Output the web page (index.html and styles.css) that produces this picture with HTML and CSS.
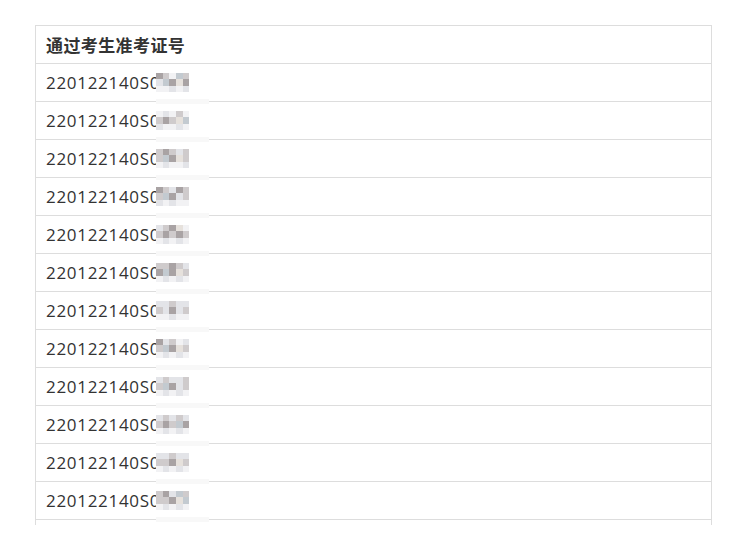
FILE: index.html
```html
<!DOCTYPE html>
<html lang="zh">
<head>
<meta charset="utf-8">
<link rel="stylesheet" href="styles.css">
</head>
<body>
<div class="frame">
<table class="list">
<thead><tr><th>通过考生准考证号</th></tr></thead>
<tbody>
<tr><td>220122140S0<span class="mosaic"><i class="a"></i><i class="b"></i><i class="f"></i><i class="c"></i><i class="b"></i><i class="e"></i><i class="c"></i><i class="a"></i><i class="d"></i><i class="a"></i><i class="f"></i><i class="f"></i><i class="e"></i><i class="f"></i><i class="e"></i></span></td></tr>
<tr><td>220122140S0<span class="mosaic"><i class="f"></i><i class="e"></i><i class="f"></i><i class="b"></i><i class="f"></i><i class="b"></i><i class="a"></i><i class="b"></i><i class="d"></i><i class="c"></i><i class="e"></i><i class="f"></i><i class="f"></i><i class="e"></i><i class="f"></i></span></td></tr>
<tr><td>220122140S0<span class="mosaic"><i class="b"></i><i class="a"></i><i class="b"></i><i class="e"></i><i class="b"></i><i class="b"></i><i class="c"></i><i class="a"></i><i class="d"></i><i class="b"></i><i class="f"></i><i class="e"></i><i class="f"></i><i class="f"></i><i class="e"></i></span></td></tr>
<tr><td>220122140S0<span class="mosaic"><i class="a"></i><i class="b"></i><i class="e"></i><i class="a"></i><i class="b"></i><i class="b"></i><i class="c"></i><i class="a"></i><i class="e"></i><i class="b"></i><i class="e"></i><i class="f"></i><i class="e"></i><i class="f"></i><i class="f"></i></span></td></tr>
<tr><td>220122140S0<span class="mosaic"><i class="e"></i><i class="b"></i><i class="a"></i><i class="d"></i><i class="f"></i><i class="b"></i><i class="a"></i><i class="b"></i><i class="a"></i><i class="b"></i><i class="f"></i><i class="e"></i><i class="f"></i><i class="e"></i><i class="f"></i></span></td></tr>
<tr><td>220122140S0<span class="mosaic"><i class="b"></i><i class="b"></i><i class="a"></i><i class="b"></i><i class="e"></i><i class="a"></i><i class="c"></i><i class="a"></i><i class="d"></i><i class="b"></i><i class="f"></i><i class="e"></i><i class="f"></i><i class="e"></i><i class="f"></i></span></td></tr>
<tr><td>220122140S0<span class="mosaic"><i class="e"></i><i class="e"></i><i class="b"></i><i class="e"></i><i class="e"></i><i class="b"></i><i class="e"></i><i class="a"></i><i class="e"></i><i class="b"></i><i class="f"></i><i class="f"></i><i class="e"></i><i class="f"></i><i class="f"></i></span></td></tr>
<tr><td>220122140S0<span class="mosaic"><i class="a"></i><i class="e"></i><i class="b"></i><i class="f"></i><i class="e"></i><i class="b"></i><i class="c"></i><i class="a"></i><i class="d"></i><i class="b"></i><i class="f"></i><i class="e"></i><i class="f"></i><i class="e"></i><i class="f"></i></span></td></tr>
<tr><td>220122140S0<span class="mosaic"><i class="e"></i><i class="b"></i><i class="e"></i><i class="e"></i><i class="b"></i><i class="b"></i><i class="c"></i><i class="a"></i><i class="e"></i><i class="b"></i><i class="f"></i><i class="e"></i><i class="f"></i><i class="e"></i><i class="f"></i></span></td></tr>
<tr><td>220122140S0<span class="mosaic"><i class="e"></i><i class="b"></i><i class="e"></i><i class="b"></i><i class="e"></i><i class="b"></i><i class="a"></i><i class="b"></i><i class="c"></i><i class="a"></i><i class="f"></i><i class="e"></i><i class="f"></i><i class="e"></i><i class="f"></i></span></td></tr>
<tr><td>220122140S0<span class="mosaic"><i class="e"></i><i class="e"></i><i class="b"></i><i class="e"></i><i class="e"></i><i class="b"></i><i class="b"></i><i class="a"></i><i class="d"></i><i class="b"></i><i class="f"></i><i class="e"></i><i class="f"></i><i class="e"></i><i class="f"></i></span></td></tr>
<tr><td>220122140S0<span class="mosaic"><i class="b"></i><i class="a"></i><i class="e"></i><i class="c"></i><i class="b"></i><i class="b"></i><i class="b"></i><i class="a"></i><i class="d"></i><i class="c"></i><i class="f"></i><i class="e"></i><i class="f"></i><i class="e"></i><i class="f"></i></span></td></tr>
<tr><td></td></tr>
</tbody>
</table>
</div>
</body>
</html>
```
FILE: styles.css
```css
html, body {
  margin: 0;
  padding: 0;
  background: #fff;
}
body {
  padding: 25px 0 0 35px;
  font-family: "Open Sans", "Noto Sans CJK SC", sans-serif;
  color: #333;
}
.frame {
  width: 677px;
  height: 500px;
  overflow: hidden;
}
.list {
  width: 677px;
  border-collapse: collapse;
  font-size: 17px;
}
.list th,
.list td {
  border: 1px solid #ddd;
  height: 38px;
  padding: 0 10px;
  text-align: left;
  vertical-align: middle;
  box-sizing: border-box;
  line-height: 20px;
}
.list th {
  font-weight: bold;
  font-family: "Noto Sans CJK SC", sans-serif;
  letter-spacing: 0.4px;
}
.list td {
  letter-spacing: 0.7px;
}
.mosaic {
  display: inline-grid;
  grid-template-columns: repeat(5, 6.6px);
  grid-auto-rows: 6.6px;
  vertical-align: top;
  margin-left: -4px;
  position: relative;
  background: #fff;
}
.mosaic::after {
  content: "";
  position: absolute;
  left: 0;
  top: 26px;
  width: 53px;
  height: 5px;
  background: #f8f8f8;
}
.mosaic i { display: block; }
.mosaic .a { background: #a9a3a4; }
.mosaic .b { background: #cfcbcc; }
.mosaic .c { background: #c3cad0; }
.mosaic .d { background: #e6e1dc; }
.mosaic .e { background: #e3e4e8; }
.mosaic .f { background: #f2f2f4; }
```
